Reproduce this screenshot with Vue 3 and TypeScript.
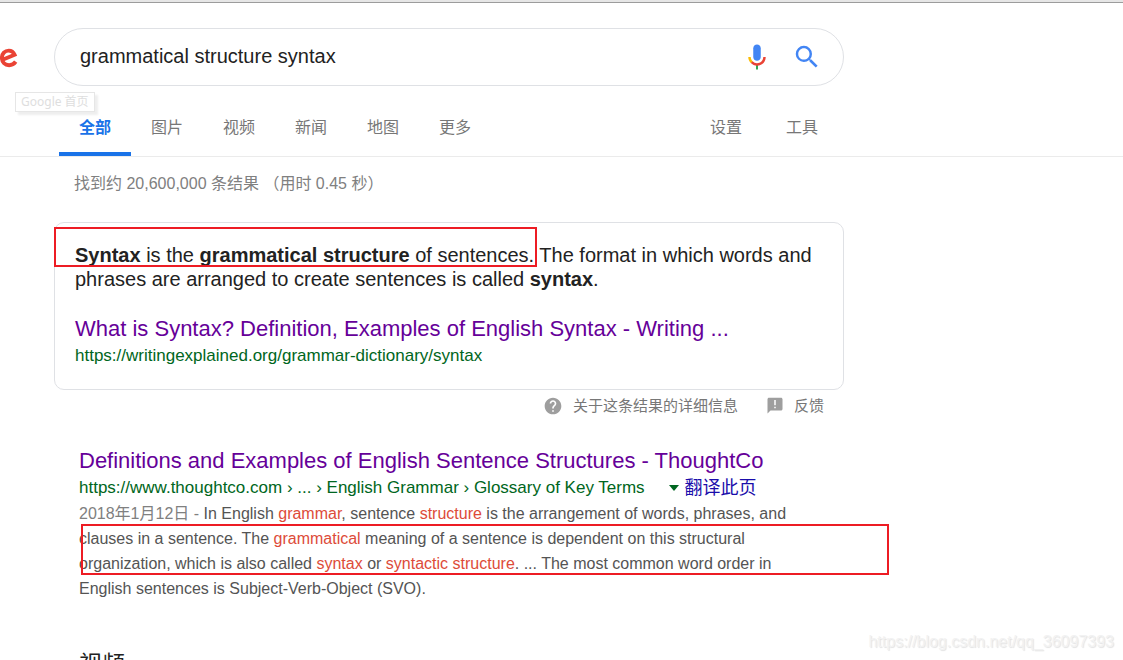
<script setup lang="ts">
import { ref } from 'vue'

interface Piece {
  text: string
  hit?: boolean
}

const query = ref('grammatical structure syntax')
const tabs: string[] = ['全部', '图片', '视频', '新闻', '地图', '更多']
const tools: string[] = ['设置', '工具']
const active = ref('全部')

const snippet: Piece[] = [
  { text: 'In English ' },
  { text: 'grammar', hit: true },
  { text: ', sentence ' },
  { text: 'structure', hit: true },
  { text: ' is the arrangement of words, phrases, and clauses in a sentence. The ' },
  { text: 'grammatical', hit: true },
  { text: ' meaning of a sentence is dependent on this structural organization, which is also called ' },
  { text: 'syntax', hit: true },
  { text: ' or ' },
  { text: 'syntactic structure', hit: true },
  { text: '. ... The most common word order in English sentences is Subject-Verb-Object (SVO).' },
]
</script>

<template>
  <div class="page">
    <div class="edge"></div>
    <header class="header">
      <a class="logo" href="#" aria-label="Google 首页">
        <svg width="18" height="22" viewBox="0 0 18 22" aria-hidden="true">
          <path d="M2 14 L14.6 8.8 C13.4 6 11.4 4.6 8.8 4.6 C4.8 4.6 1.9 7.8 1.9 11.8 C1.9 16.2 5 19.2 9.1 19.2 C12 19.2 14.2 17.9 15.7 15.7" fill="none" stroke="#ea4335" stroke-width="3.9" />
        </svg>
      </a>
      <span class="tooltip">Google 首页</span>
      <form class="search" role="search" @submit.prevent>
        <input v-model="query" class="query" type="text" aria-label="搜索" />
        <button class="icon-btn" type="button" aria-label="语音搜索">
          <svg width="30" height="30" viewBox="0 0 24 24" aria-hidden="true">
            <path fill="#4285f4" d="M12 15c1.66 0 3-1.31 3-2.97V5c0-1.66-1.34-3-3-3S9 3.34 9 5v7.03C9 13.69 10.34 15 12 15z" />
            <path fill="#34a853" d="M11.2 18.08h1.6V22h-1.6z" />
            <path fill="#fbbc05" d="M7.05 16.87c-1.27-1.33-2.05-2.83-2.05-4.87h2c0 1.45.56 2.42 1.47 3.38v.32l-1.15 1.18z" />
            <path fill="#ea4335" d="M12 16.93a4.97 5.25 0 0 1-3.54-1.55l-1.41 1.49c1.26 1.34 3.02 2.13 4.95 2.13 3.87 0 6.99-2.92 6.99-7h-1.99c0 2.92-2.24 4.93-5 4.93z" />
          </svg>
        </button>
        <button class="icon-btn" type="submit" aria-label="Google 搜索">
          <svg width="30" height="30" viewBox="0 0 24 24" aria-hidden="true">
            <path fill="#4285f4" d="M15.5 14h-.79l-.28-.27A6.47 6.47 0 0 0 16 9.5 6.5 6.5 0 1 0 9.5 16c1.61 0 3.09-.59 4.23-1.57l.27.28v.79l5 4.99L20.49 19l-4.99-5zm-6 0C7.01 14 5 11.99 5 9.5S7.01 5 9.5 5 14 7.01 14 9.5 11.99 14 9.5 14z" />
          </svg>
        </button>
      </form>
    </header>

    <nav class="nav" aria-label="搜索类型">
      <div class="tabs">
        <a v-for="t in tabs" :key="t" href="#" class="tab" :class="{ on: t === active }" @click.prevent="active = t">{{ t }}</a>
      </div>
      <div class="tools">
        <button v-for="t in tools" :key="t" type="button" class="tool">{{ t }}</button>
      </div>
    </nav>

    <main class="main">
      <p class="stats">找到约 20,600,000 条结果 （用时 0.45 秒）</p>

      <section class="card">
        <p class="answer">
          <b>Syntax</b> is the <b>grammatical structure</b> of sentences. The format in which words and phrases are arranged to create sentences is called <b>syntax</b>.
        </p>
        <h3 class="title"><a href="#">What is Syntax? Definition, Examples of English Syntax - Writing ...</a></h3>
        <cite class="url">https://writingexplained.org/grammar-dictionary/syntax</cite>
        <div class="mark mark-answer"></div>
      </section>

      <div class="about">
        <a href="#" class="about-link">
          <svg width="20" height="20" viewBox="0 0 24 24" aria-hidden="true">
            <path fill="#9e9e9e" d="M12 2C6.48 2 2 6.48 2 12s4.48 10 10 10 10-4.48 10-10S17.52 2 12 2zm1 17h-2v-2h2v2zm2.07-7.75l-.9.92C13.45 12.9 13 13.5 13 15h-2v-.5c0-1.1.45-2.1 1.17-2.83l1.24-1.26c.37-.36.59-.86.59-1.41 0-1.1-.9-2-2-2s-2 .9-2 2H8c0-2.21 1.79-4 4-4s4 1.79 4 4c0 .88-.36 1.68-.93 2.25z" />
          </svg>
          <span>关于这条结果的详细信息</span>
        </a>
        <a href="#" class="about-link">
          <svg width="18" height="18" viewBox="0 0 24 24" aria-hidden="true">
            <path fill="#9e9e9e" d="M20 1H4c-1.1 0-2 .9-2 2v19l4-4h14c1.1 0 2-.9 2-2V3c0-1.1-.9-2-2-2zm-7 14h-2v-2h2v2zm0-4h-2V4h2v7z" />
          </svg>
          <span>反馈</span>
        </a>
      </div>

      <article class="result">
        <h3 class="title"><a href="#">Definitions and Examples of English Sentence Structures - ThoughtCo</a></h3>
        <div class="source">
          <cite class="url">https://www.thoughtco.com › ... › English Grammar › Glossary of Key Terms</cite>
          <button class="caret" type="button" aria-label="更多选项"></button>
          <a class="translate" href="#">翻译此页</a>
        </div>
        <p class="snippet">
          <span class="date">2018年1月12日 - </span><template v-for="(p, i) in snippet" :key="i"><em v-if="p.hit">{{ p.text }}</em><template v-else>{{ p.text }}</template></template>
        </p>
        <div class="mark mark-snippet"></div>
      </article>

      <h2 class="videos">视频</h2>
    </main>

    <div class="watermark">https://blog.csdn.net/qq_36097393</div>
  </div>
</template>

<style>
body {
  background: #fff;
}
</style>

<style scoped>
.page {
  position: relative;
  height: 100vh;
  overflow: hidden;
  background: #fff;
  color: #222;
  font-family: "Liberation Sans", "Noto Sans CJK SC", sans-serif;
  font-size: 16px;
}
.page * {
  box-sizing: border-box;
}
a {
  text-decoration: none;
}
p,
h2,
h3 {
  margin: 0;
  font-weight: normal;
}
button {
  padding: 0;
  border: 0;
  background: none;
  font: inherit;
  cursor: pointer;
}
.edge {
  height: 3px;
  background: #e6e6e6;
  border-bottom: 1px solid #9c9c9c;
}
.header {
  position: relative;
  display: flex;
  align-items: center;
  padding-top: 25px;
}
.logo {
  display: flex;
  width: 54px;
}
.tooltip {
  position: absolute;
  left: 15px;
  top: 89px;
  padding: 0 5px;
  border: 1px solid #e6e6e6;
  background: #fff;
  box-shadow: 3px 3px 2px #eee;
  color: #dedede;
  font-family: "Noto Sans", "Noto Sans CJK SC", sans-serif;
  font-size: 12px;
  line-height: 18px;
  white-space: nowrap;
}
.search {
  display: flex;
  align-items: center;
  gap: 20px;
  flex: 0 1 790px;
  height: 58px;
  padding: 0 21px 0 25px;
  border: 1px solid #dfe1e5;
  border-radius: 29px;
}
.query {
  flex: 1;
  min-width: 0;
  padding: 0 0 2px;
  border: 0;
  outline: 0;
  background: none;
  color: #222;
  font: inherit;
  font-size: 20px;
}
.icon-btn {
  display: flex;
}
.nav {
  display: flex;
  height: 71px;
  padding-left: 59px;
  border-bottom: 1px solid #ebebeb;
}
.tabs {
  display: flex;
  align-items: flex-end;
  width: 629px;
}
.tab {
  height: 44px;
  padding: 0 20px;
  border-bottom: 4px solid transparent;
  color: #777;
  line-height: 32px;
}
.tab.on {
  border-color: #1a73e8;
  color: #1a73e8;
  font-weight: bold;
}
.tools {
  display: flex;
  align-items: flex-end;
}
.tool {
  height: 44px;
  padding: 0 22px 12px;
  color: #777;
  line-height: 32px;
}
.main {
  max-width: 844px;
  padding-left: 54px;
}
.stats {
  padding: 15px 20px 0;
  color: #808080;
  line-height: 24px;
}
.card {
  position: relative;
  margin-top: 26px;
  padding: 20px;
  border: 1px solid #dfe1e5;
  border-radius: 10px;
}
.answer {
  margin-bottom: 24px;
  font-size: 20px;
  line-height: 24px;
}
.title {
  font-size: 22px;
  line-height: 28px;
  white-space: nowrap;
}
.title a {
  color: #609;
}
.url {
  color: #006621;
  font-size: 17px;
  font-style: normal;
  line-height: 26px;
  white-space: nowrap;
}
.mark {
  position: absolute;
  border: 2px solid #ed1c24;
  pointer-events: none;
}
.mark-answer {
  left: -1px;
  top: 4px;
  width: 483px;
  height: 40px;
}
.about {
  display: flex;
  justify-content: flex-end;
  gap: 28px;
  padding: 4px 20px 0 0;
}
.about-link {
  display: flex;
  align-items: center;
  gap: 10px;
  color: #777;
  font-size: 15px;
  line-height: 24px;
}
.result {
  position: relative;
  margin-top: 29px;
  padding-left: 25px;
}
.source {
  display: flex;
  align-items: center;
  height: 26px;
}
.caret {
  margin: 0 6px 0 24px;
  border: 5px solid transparent;
  border-top: 6px solid #006621;
  border-bottom: 0;
}
.translate {
  color: #1a0dab;
  font-size: 18px;
  line-height: 26px;
}
.snippet {
  max-width: 740px;
  color: #545454;
  line-height: 25px;
}
.date {
  color: #808080;
}
.snippet em {
  color: #dd4b39;
  font-style: normal;
}
.mark-snippet {
  left: 27px;
  top: 77px;
  width: 808px;
  height: 51px;
}
.videos {
  margin-top: 47px;
  padding-left: 25px;
  font-size: 23px;
  line-height: 32px;
}
.watermark {
  position: absolute;
  right: 9px;
  bottom: 8px;
  color: #f2f2f2;
  font-size: 16px;
  line-height: 20px;
  text-shadow: 1px 1px 1px #e2e2e2;
}
</style>
